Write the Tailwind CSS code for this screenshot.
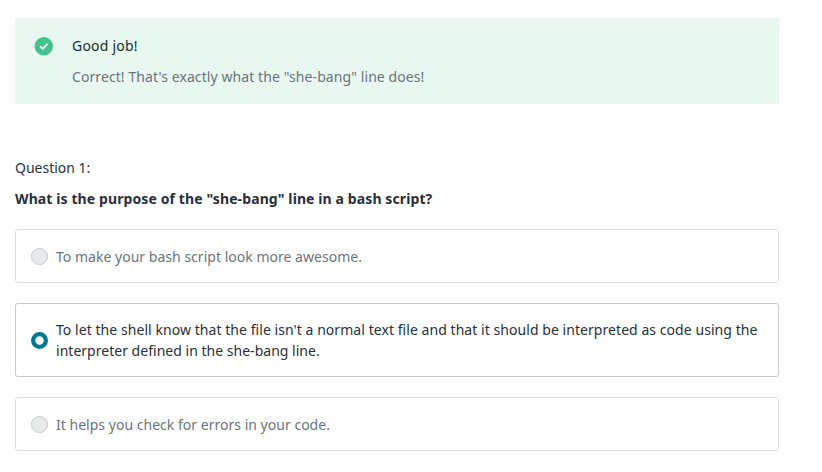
<!DOCTYPE html>
<html lang="en"><head><meta charset="utf-8"><title>Quiz</title>
<script src="https://cdn.jsdelivr.net/npm/@tailwindcss/browser@4"></script></head>
<body class="bg-white font-['Noto_Sans',sans-serif] text-[14px] leading-[21px] text-[#29303b]">
<main class="w-[779px] pl-[15px] pt-[18px]">
<section class="flex h-[86px] bg-[#e8f7f0] pl-[19px] pt-[17px]">
<svg class="mt-[2px] h-[19px] w-[19px] shrink-0" viewBox="0 0 19 19"><circle cx="9.8" cy="9.2" r="9.2" fill="#46c28e"/><path d="M6 9.3 8.8 11.8 13.6 6.8" fill="none" stroke="#fff" stroke-width="1.6"/></svg>
<div class="pl-[19px]"><p class="tracking-[0.22px] text-[#14302b]">Good job!</p><p class="mt-[10px] tracking-[0.085px] text-[#6c737c]">Correct! That's exactly what the "she-bang" line does!</p></div>
</section>
<p class="mt-[53px]">Question 1:</p>
<h1 class="mt-[10px] font-bold tracking-[0.105px]">What is the purpose of the "she-bang" line in a bash script?</h1>
<div class="mt-5 flex flex-col gap-5">
<label class="flex h-[54px] items-center gap-2 rounded-[3px] border border-[#dedfe0] pl-[15px] tracking-[0.02px] text-[#6c737c]"><span class="h-[17px] w-[17px] shrink-0 rounded-full border border-[#cacbcc] bg-[#e8e9eb]"></span><span>To make your bash script look more awesome.</span></label>
<label class="flex h-[74px] items-center gap-2 rounded-[3px] border border-[#cacbcc] pl-[15px]"><svg class="h-[17px] w-[17px] shrink-0" viewBox="0 0 17 17"><circle cx="8.5" cy="8.5" r="6.4" fill="#fff" stroke="#007791" stroke-width="4.2"/></svg><span><span class="tracking-[0.056px]">To let the shell know that the file isn't a normal text file and that it should be interpreted as code using the</span><br><span class="tracking-[0.02px]">interpreter defined in the she-bang line.</span></span></label>
<label class="flex h-[54px] items-center gap-2 rounded-[3px] border border-[#dedfe0] pl-[15px] tracking-[0.02px] text-[#6c737c]"><span class="h-[17px] w-[17px] shrink-0 rounded-full border border-[#cacbcc] bg-[#e8e9eb]"></span><span>It helps you check for errors in your code.</span></label>
</div></main></body></html>
